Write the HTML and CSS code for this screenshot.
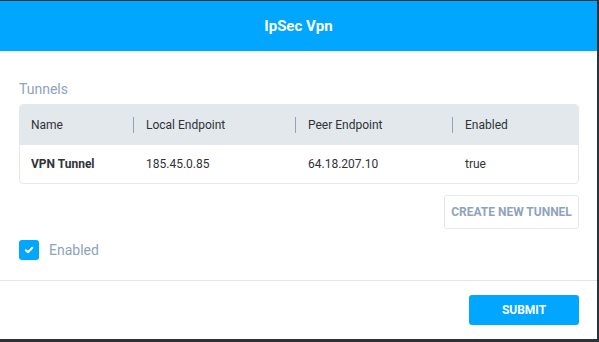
FILE: index.html
```html
<!DOCTYPE html>
<html>
  <head>
    <meta charset="utf-8">
    <title>IpSec Vpn</title>
    <link rel="stylesheet" href="styles.css">
  </head>
  <body>
    <div class="dialog">
      <div class="dialog_header">IpSec Vpn</div>

      <div class="dialog_body">
        <div class="section_label">Tunnels</div>

        <div class="table">
          <div class="row head">
            <div class="cell">Name</div>
            <div class="cell">Local Endpoint</div>
            <div class="cell">Peer Endpoint</div>
            <div class="cell">Enabled</div>
          </div>
          <div class="row">
            <div class="cell name">VPN Tunnel</div>
            <div class="cell">185.45.0.85</div>
            <div class="cell">64.18.207.10</div>
            <div class="cell">true</div>
          </div>
        </div>

        <div class="actions">
          <button class="btn_outline">Create New Tunnel</button>
        </div>

        <label class="check">
          <span class="check_box">
            <svg width="10" height="10" viewBox="0 0 10 10">
              <path d="M1.8 5.2 L4 7.3 L8.3 2.8" fill="none" stroke="#fff" stroke-width="2" stroke-linecap="round" stroke-linejoin="round"/>
            </svg>
          </span>
          Enabled
        </label>
      </div>

      <div class="dialog_footer">
        <button class="btn_primary">Submit</button>
      </div>
    </div>
  </body>
</html>
```

FILE: styles.css
```css
* {
  margin: 0;
  padding: 0;
  box-sizing: border-box;
}

body {
  background-color: #2d3238;
  font-family: Roboto, 'Liberation Sans', sans-serif;
  width: 599px;
  height: 342px;
  overflow: hidden;
}

.dialog {
  width: 597px;
  height: 338px;
  margin-top: 1px;
  background-color: #fff;
}

.dialog_header {
  height: 50px;
  background-color: #00a6ff;
  color: #fff;
  font-size: 15px;
  font-weight: bold;
  display: flex;
  align-items: center;
  justify-content: center;
}

.dialog_body {
  padding: 28px 18px 20px 19px;
  border-bottom: 1px solid #e3e7eb;
}

.section_label {
  font-size: 14px;
  line-height: 20px;
  color: #8fa4ba;
  margin-bottom: 5px;
}

.table {
  border: 1px solid #e3e8ec;
  border-radius: 4px;
  overflow: hidden;
}

.row {
  display: grid;
  grid-template-columns: 113px 162px 157px 1fr;
  height: 38px;
  align-items: center;
  font-size: 12px;
  color: #2f3337;
}

.row.head {
  background-color: #e3e8ed;
  height: 40px;
}

.cell {
  padding-left: 13px;
}

.cell:first-child {
  padding-left: 11px;
}

.head .cell {
  display: flex;
  align-items: center;
  padding-left: 0;
}

.head .cell:first-child {
  padding-left: 11px;
}

.head .cell + .cell::before {
  content: "";
  width: 1px;
  height: 16px;
  background-color: #8fa4ba;
  margin-right: 12px;
}

.name {
  font-weight: bold;
}

.actions {
  display: flex;
  justify-content: flex-end;
  margin-top: 11px;
}

.btn_outline {
  height: 34px;
  width: 135px;
  border: 1px solid #e3e8ec;
  border-radius: 3px;
  background: #fff;
  color: #8fa4ba;
  font-family: Roboto, 'Liberation Sans', sans-serif;
  font-size: 12px;
  font-weight: bold;
  text-transform: uppercase;
}

.check {
  display: flex;
  align-items: center;
  gap: 10px;
  margin-top: 11px;
  font-size: 14px;
  line-height: 16px;
  color: #8fa4ba;
}

.check_box {
  width: 20px;
  height: 20px;
  border-radius: 3px;
  background-color: #00a6ff;
  display: flex;
  align-items: center;
  justify-content: center;
}

.dialog_footer {
  display: flex;
  justify-content: flex-end;
  padding: 14px 18px 0 19px;
}

.btn_primary {
  width: 110px;
  height: 30px;
  border: none;
  border-radius: 3px;
  background-color: #00a6ff;
  color: #fff;
  font-family: Roboto, 'Liberation Sans', sans-serif;
  font-size: 12px;
  font-weight: bold;
  text-transform: uppercase;
}
```
